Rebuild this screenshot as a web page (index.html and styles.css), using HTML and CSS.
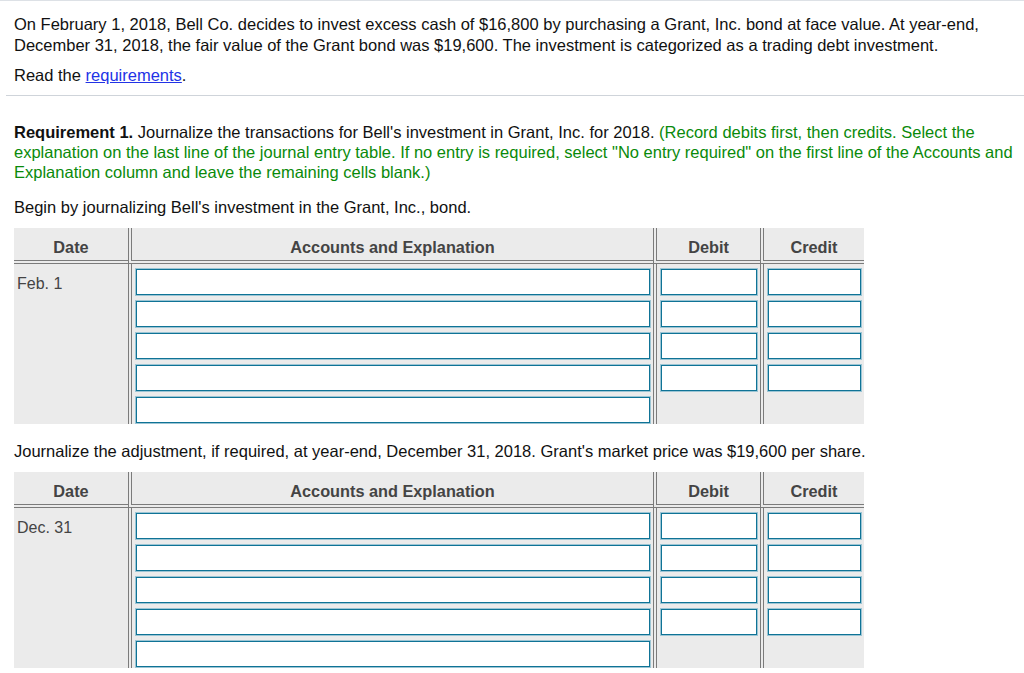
FILE: index.html
```html
<!DOCTYPE html>
<html>
<head>
<meta charset="utf-8">
<link rel="stylesheet" href="styles.css">
</head>
<body>
<div class="page">
  <section class="intro">
    <p class="lead">On February 1, 2018, Bell Co. decides to invest excess cash of $16,800 by purchasing a Grant, Inc. bond at face value. At year-end, December 31, 2018, the fair value of the Grant bond was $19,600. The investment is categorized as a trading debt investment.</p>
    <p class="read">Read the <a href="#" class="link">requirements</a>.</p>
  </section>
  <section class="work">
    <p class="req"><b>Requirement 1.</b> Journalize the transactions for Bell's investment in Grant, Inc. for 2018. <span class="hint">(Record debits first, then credits. Select the explanation on the last line of the journal entry table. If no entry is required, select "No entry required" on the first line of the Accounts and Explanation column and leave the remaining cells blank.)</span></p>
    <p class="step">Begin by journalizing Bell's investment in the Grant, Inc., bond.</p>

    <div class="jt">
      <div class="th">Date</div>
      <div class="th sep">Accounts and Explanation</div>
      <div class="th sep">Debit</div>
      <div class="th sep">Credit</div>
      <div class="td date">Feb. 1</div>
      <div class="td sep col acc">
        <input class="in"><input class="in"><input class="in"><input class="in"><input class="in">
      </div>
      <div class="td sep col dr">
        <input class="in"><input class="in"><input class="in"><input class="in">
      </div>
      <div class="td sep col cr">
        <input class="in"><input class="in"><input class="in"><input class="in">
      </div>
    </div>

    <p class="step2">Journalize the adjustment, if required, at year-end, December 31, 2018. Grant's market price was $19,600 per share.</p>

    <div class="jt">
      <div class="th">Date</div>
      <div class="th sep">Accounts and Explanation</div>
      <div class="th sep">Debit</div>
      <div class="th sep">Credit</div>
      <div class="td date">Dec. 31</div>
      <div class="td sep col acc">
        <input class="in"><input class="in"><input class="in"><input class="in"><input class="in">
      </div>
      <div class="td sep col dr">
        <input class="in"><input class="in"><input class="in"><input class="in">
      </div>
      <div class="td sep col cr">
        <input class="in"><input class="in"><input class="in"><input class="in">
      </div>
    </div>
  </section>
</div>
</body>
</html>
```

FILE: styles.css
```css
* { box-sizing: border-box; }
html, body {
  margin: 0;
  padding: 0;
  background: #fff;
}
body {
  font-family: "Liberation Sans", Arial, Helvetica, sans-serif;
  font-size: 16.5px;
  color: #111;
}
.page {
  border-top: 1px solid #dde1e6;
  width: 1024px;
}
.intro {
  padding: 13px 8px 9px 8px;
  margin-left: 6px;
  border-bottom: 1px solid #cfd4da;
}
.intro p {
  margin: 0;
  line-height: 21px;
}
.intro .read {
  margin-top: 9px;
}
.link {
  color: #2233e6;
  text-decoration: underline;
}
.work {
  padding: 26px 4px 0 14px;
}
.work p {
  margin: 0;
}
.req {
  line-height: 20px;
}
.hint {
  color: #0a8a0a;
}
.step {
  margin-top: 15px !important;
  line-height: 20px;
}
.step2 {
  margin-top: 17px !important;
  line-height: 20px;
  margin-bottom: 9px !important;
}
.jt {
  display: grid;
  grid-template-columns: 114px 525px 107px 104px;
  width: 850px;
  background: #ebebeb;
  margin-top: 11px;
  color: #444;
}
.th {
  height: 36px;
  border-bottom: 4px double #7b7b7b;
  text-align: center;
  font-weight: bold;
  font-size: 16.3px;
  padding-top: 10px;
  line-height: 18px;
}
.sep {
  border-left: 4px double #7b7b7b;
}
.td {
  height: 160px;
}
.date {
  padding: 10px 3px 0 3px;
  line-height: 20px;
  font-size: 16px;
}
.col {
  display: flex;
  flex-direction: column;
  gap: 6px;
  padding: 5px 3px 0 4px;
}
.in {
  display: block;
  width: 100%;
  height: 26px;
  margin: 0;
  padding: 0 4px;
  border: 1px solid #0f7396;
  box-shadow: 0 0 0 1px rgba(60, 150, 185, 0.45);
  background: #fff;
  border-radius: 0;
  font: inherit;
  outline: none;
}
```
